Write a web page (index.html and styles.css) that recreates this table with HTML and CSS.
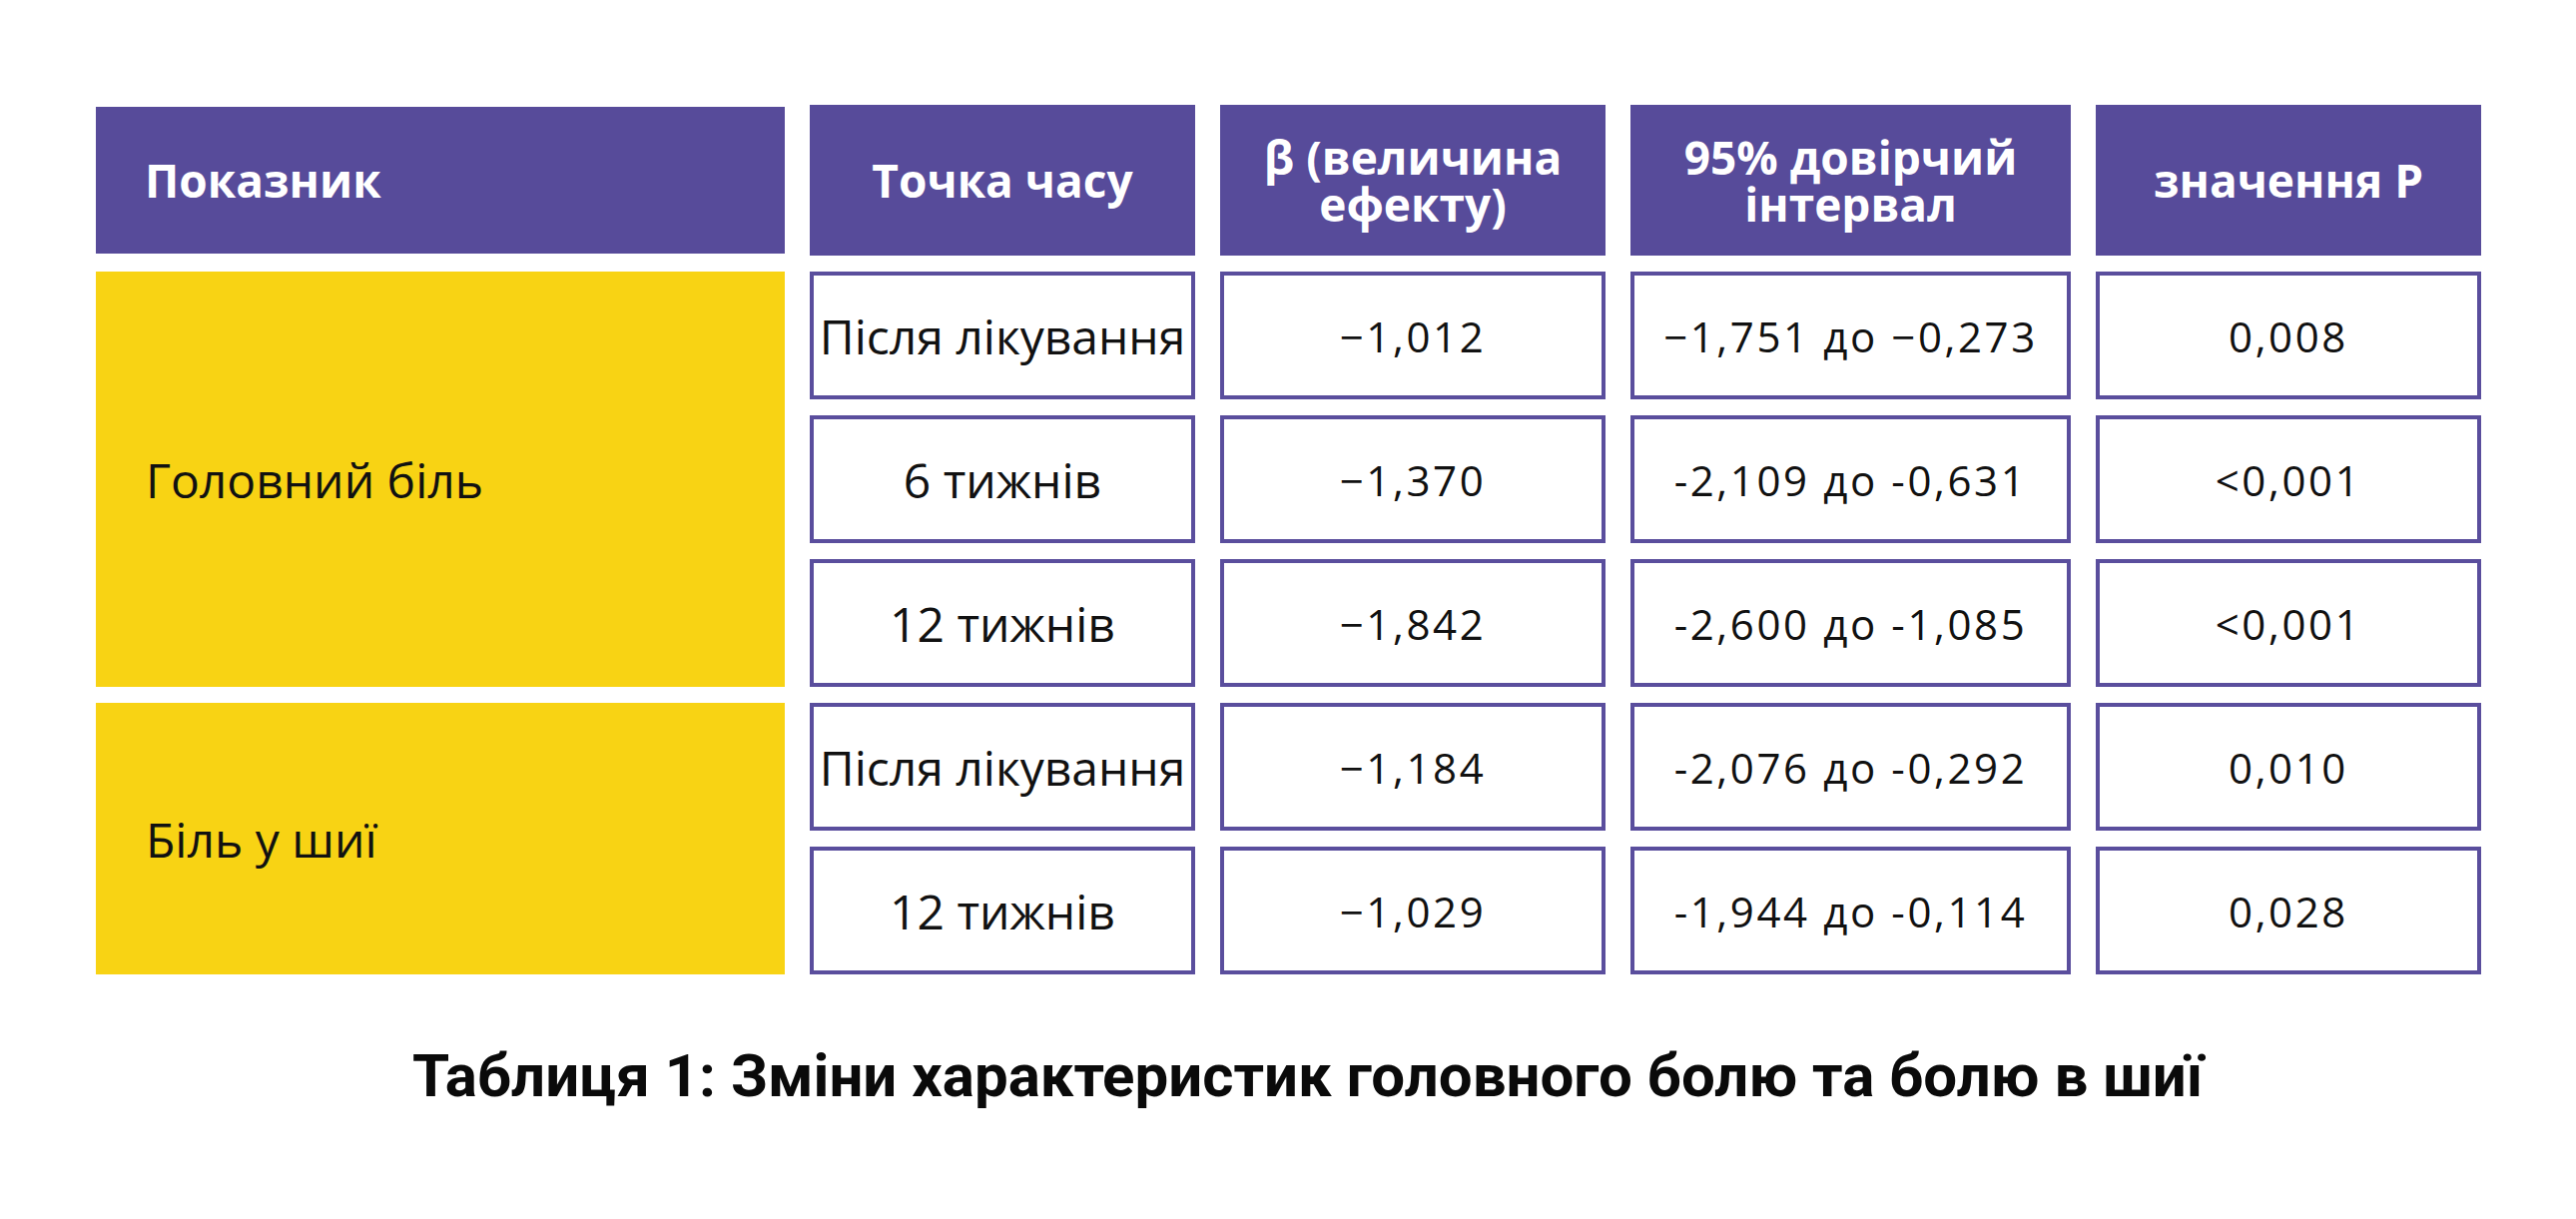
FILE: index.html
```html
<!DOCTYPE html>
<html lang="uk">
<head>
<meta charset="utf-8">
<title>Таблиця 1</title>
<link rel="stylesheet" href="styles.css">
</head>
<body>
<main class="page">
  <div class="table">
    <div class="th th-left">Показник</div>
    <div class="th">Точка часу</div>
    <div class="th">β (величина<br>ефекту)</div>
    <div class="th">95% довірчий<br>інтервал</div>
    <div class="th">значення Р</div>

    <div class="label span3">Головний біль</div>
    <div class="td">Після лікування</div>
    <div class="td num">−1,012</div>
    <div class="td num">−1,751 до −0,273</div>
    <div class="td num">0,008</div>

    <div class="td">6 тижнів</div>
    <div class="td num">−1,370</div>
    <div class="td num">-2,109 до -0,631</div>
    <div class="td num">&lt;0,001</div>

    <div class="td">12 тижнів</div>
    <div class="td num">−1,842</div>
    <div class="td num">-2,600 до -1,085</div>
    <div class="td num">&lt;0,001</div>

    <div class="label span2">Біль у шиї</div>
    <div class="td">Після лікування</div>
    <div class="td num">−1,184</div>
    <div class="td num">-2,076 до -0,292</div>
    <div class="td num">0,010</div>

    <div class="td">12 тижнів</div>
    <div class="td num">−1,029</div>
    <div class="td num">-1,944 до -0,114</div>
    <div class="td num">0,028</div>
  </div>
  <p class="caption">Таблиця 1: Зміни характеристик головного болю та болю в шиї</p>
</main>
</body>
</html>
```

FILE: styles.css
```css
html, body {
  margin: 0;
  padding: 0;
  background: #ffffff;
}

.page {
  width: 2580px;
  height: 1221px;
  padding: 105px 0 0 96px;
  box-sizing: border-box;
  font-family: "Open Sans", "Noto Sans", sans-serif;
  color: #111111;
}

.table {
  display: grid;
  grid-template-columns: 690px 386px 386px 441px 386px;
  grid-template-rows: 151px repeat(5, 128px);
  column-gap: 25px;
  row-gap: 16px;
}

.th {
  background: #574b9a;
  color: #ffffff;
  font-weight: 700;
  font-size: 46px;
  line-height: 47px;
  display: flex;
  align-items: center;
  justify-content: center;
  text-align: center;
}

.th-left {
  justify-content: flex-start;
  padding-left: 49px;
  margin: 2px 0;
}

.label {
  grid-column: 1;
  background: #f8d314;
  display: flex;
  align-items: center;
  padding-left: 50px;
  font-size: 48px;
}

.span3 { grid-row: span 3; }
.span2 { grid-row: span 2; }

.td {
  background: #ffffff;
  border: 4px solid #5a4e9d;
  box-sizing: border-box;
  display: flex;
  align-items: center;
  justify-content: center;
  font-size: 48px;
  white-space: nowrap;
}

.num {
  font-size: 42px;
  letter-spacing: 2.6px;
}

.caption {
  margin: 66px 0 0 317px;
  font-family: Roboto, "Open Sans", sans-serif;
  font-weight: 700;
  font-size: 60px;
  line-height: 72px;
  color: #0a0a0a;
  white-space: nowrap;
}
```
